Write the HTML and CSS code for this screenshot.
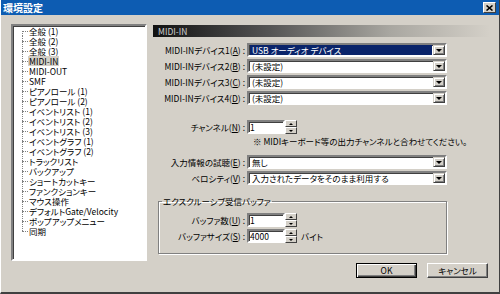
FILE: index.html
```html
<!DOCTYPE html>
<html lang="ja">
<head>
    <meta charset="UTF-8">
    <title>環境設定</title>
    <link rel="stylesheet" href="styles.css">
</head>
<body>
    <div class="window">
        <div class="titlebar">
            <span class="title">環境設定</span>
            <span class="close">
                <svg width="7" height="6" viewBox="0 0 7 6"><path d="M0.5 0.5 L6.5 5.5 M6.5 0.5 L0.5 5.5" stroke="#000" stroke-width="1.6"/></svg>
            </span>
        </div>

        <div class="main">
            <!-- left tree -->
            <div class="tree">
                <ul>
                    <li><span class="twig"></span><span class="node">全般 (1)</span></li>
                    <li><span class="twig"></span><span class="node">全般 (2)</span></li>
                    <li><span class="twig"></span><span class="node">全般 (3)</span></li>
                    <li><span class="twig"></span><span class="node sel">MIDI-IN</span></li>
                    <li><span class="twig"></span><span class="node">MIDI-OUT</span></li>
                    <li><span class="twig"></span><span class="node">SMF</span></li>
                    <li><span class="twig"></span><span class="node">ピアノロール (1)</span></li>
                    <li><span class="twig"></span><span class="node">ピアノロール (2)</span></li>
                    <li><span class="twig"></span><span class="node">イベントリスト (1)</span></li>
                    <li><span class="twig"></span><span class="node">イベントリスト (2)</span></li>
                    <li><span class="twig"></span><span class="node">イベントリスト (3)</span></li>
                    <li><span class="twig"></span><span class="node">イベントグラフ (1)</span></li>
                    <li><span class="twig"></span><span class="node">イベントグラフ (2)</span></li>
                    <li><span class="twig"></span><span class="node">トラックリスト</span></li>
                    <li><span class="twig"></span><span class="node">バックアップ</span></li>
                    <li><span class="twig"></span><span class="node">ショートカットキー</span></li>
                    <li><span class="twig"></span><span class="node">ファンクションキー</span></li>
                    <li><span class="twig"></span><span class="node">マウス操作</span></li>
                    <li><span class="twig"></span><span class="node">デフォルトGate/Velocity</span></li>
                    <li><span class="twig"></span><span class="node">ポップアップメニュー</span></li>
                    <li><span class="twig"></span><span class="node">同期</span></li>
                </ul>
            </div>

            <!-- settings panel -->
            <div class="panel">
                <div class="panel-head">MIDI-IN</div>

                <div class="devices">
                    <div class="field">
                        <label>MIDI-INデバイス1(<u>A</u>) :</label>
                        <div class="combo"><span class="value picked">USB オーディオ デバイス</span><span class="drop"><i></i></span></div>
                    </div>
                    <div class="field">
                        <label>MIDI-INデバイス2(<u>B</u>) :</label>
                        <div class="combo"><span class="value">(未設定)</span><span class="drop"><i></i></span></div>
                    </div>
                    <div class="field">
                        <label>MIDI-INデバイス3(<u>C</u>) :</label>
                        <div class="combo"><span class="value">(未設定)</span><span class="drop"><i></i></span></div>
                    </div>
                    <div class="field">
                        <label>MIDI-INデバイス4(<u>D</u>) :</label>
                        <div class="combo"><span class="value">(未設定)</span><span class="drop"><i></i></span></div>
                    </div>
                </div>

                <div class="channel">
                    <div class="field">
                        <label>チャンネル(<u>N</u>) :</label>
                        <div class="spin"><span class="input">1</span><span class="arrows"><b class="up"><i></i></b><b class="down"><i></i></b></span></div>
                    </div>
                    <div class="note">※ MIDIキーボード等の出力チャンネルと合わせてください。</div>
                </div>

                <div class="options">
                    <div class="field">
                        <label>入力情報の試聴(<u>E</u>) :</label>
                        <div class="combo"><span class="value">無し</span><span class="drop"><i></i></span></div>
                    </div>
                    <div class="field">
                        <label>ベロシティ(<u>V</u>) :</label>
                        <div class="combo"><span class="value">入力されたデータをそのまま利用する</span><span class="drop"><i></i></span></div>
                    </div>
                </div>

                <fieldset class="group">
                    <legend>エクスクルーシブ受信バッファ</legend>
                    <div class="field short">
                        <label>バッファ数(<u>U</u>) :</label>
                        <div class="spin"><span class="input">1</span><span class="arrows"><b class="up"><i></i></b><b class="down"><i></i></b></span></div>
                    </div>
                    <div class="field short">
                        <label>バッファサイズ(<u>S</u>) :</label>
                        <div class="spin"><span class="input">4000</span><span class="arrows"><b class="up"><i></i></b><b class="down"><i></i></b></span></div>
                        <span class="unit">バイト</span>
                    </div>
                </fieldset>

                <div class="buttons">
                    <button class="btn default">OK</button>
                    <button class="btn">キャンセル</button>
                </div>
            </div>
        </div>
    </div>
</body>
</html>
```

FILE: styles.css
```css
/* classic dialog look */
* {
    box-sizing: border-box;
}

body {
    margin: 0;
    width: 500px;
    height: 294px;
    overflow: hidden;
    background-color: #d4d0c8;
    font-family: "Noto Sans CJK JP", "DejaVu Sans", sans-serif;
    font-size: 8.5px;
    font-feature-settings: "palt";
    color: #000;
}

.window {
    height: 294px;
    border-left: 1px solid #fff;
    border-right: 1px solid #404040;
    border-bottom: 2px solid #404040;
}

/* title bar */
.titlebar {
    height: 15px;
    background-color: #0d5cb2;
    display: flex;
    align-items: center;
    justify-content: space-between;
    padding: 0 3px 0 2px;
    color: #fff;
    font-weight: bold;
    font-size: 10px;
}

.close {
    width: 13px;
    height: 11px;
    background-color: #d4d0c8;
    border: 1px solid;
    border-color: #fff #404040 #404040 #fff;
    display: flex;
    align-items: center;
    justify-content: center;
}

.main {
    display: flex;
    align-items: flex-start;
    padding: 9px 0 0 10px;
}

/* tree view */
.tree {
    width: 136px;
    height: 237px;
    background-color: #fff;
    border: 2px solid;
    border-color: #808080 #fff #fff #808080;
    box-shadow: inset 1px 1px #404040;
}

.tree ul {
    list-style: none;
    margin: 0;
    padding: 0 0 0 9px;
}

.tree li {
    height: 10px;
    line-height: 10px;
    display: flex;
    align-items: center;
    white-space: nowrap;
    background: repeating-linear-gradient(to bottom, #808080 0 1px, transparent 1px 2px) no-repeat 0 0 / 1px 100%;
}

.tree li:first-child {
    background-position: 0 5px;
    background-size: 1px 5px;
}

.tree li:last-child {
    background-size: 1px 5px;
}

.twig {
    width: 6px;
    border-top: 1px dotted #808080;
}

.node {
    padding: 0 1px;
}

.node.sel {
    background-color: #d4d0c8;
}

/* right side */
.panel {
    width: 337px;
    margin-left: 6px;
}

.panel-head {
    height: 12px;
    margin-top: 1px;
    line-height: 12px;
    padding-left: 5px;
    color: #d0d0d0;
    background: linear-gradient(to right, #111 0%, #555 35%, #a8a6a0 70%, #d4d0c8 100%);
}

.field {
    display: grid;
    grid-template-columns: 94px 200px;
    align-items: center;
    height: 14px;
    margin-top: 2px;
}

.field label {
    text-align: right;
    padding-right: 2px;
    white-space: nowrap;
}

.devices {
    margin-top: 6px;
}

.channel {
    margin-top: 15px;
}

.channel .field {
    grid-template-columns: 94px 50px;
}

.note {
    margin: 2px 0 0 100px;
    line-height: 10px;
    white-space: nowrap;
}

.options {
    margin-top: 9px;
}

/* combo box */
.combo {
    height: 14px;
    display: flex;
    background-color: #fff;
    border: 2px solid;
    border-color: #808080 #fff #fff #808080;
    box-shadow: inset 1px 1px #404040;
}

.combo .value {
    flex: 1;
    margin: 0 1px 0 1px;
    padding-left: 2px;
    line-height: 10px;
    white-space: nowrap;
}

.combo .value.picked {
    background-color: #0a246a;
    color: #fff;
}

.drop {
    width: 12px;
    height: 10px;
    display: flex;
    align-items: center;
    justify-content: center;
    background-color: #d4d0c8;
    border: 1px solid;
    border-color: #d4d0c8 #404040 #404040 #d4d0c8;
    box-shadow: inset 1px 1px #fff, inset -1px -1px #808080;
}

.drop i {
    border-left: 3px solid transparent;
    border-right: 3px solid transparent;
    border-top: 3px solid #000;
}

/* spin box */
.spin {
    width: 50px;
    height: 14px;
    display: flex;
}

.spin .input {
    flex: 1;
    line-height: 10px;
    padding-left: 1px;
    background-color: #fff;
    border: 2px solid;
    border-color: #808080 #fff #fff #808080;
    box-shadow: inset 1px 1px #404040;
}

.arrows {
    width: 12px;
    display: flex;
    flex-direction: column;
}

.arrows b {
    flex: 1;
    display: flex;
    align-items: center;
    justify-content: center;
    background-color: #d4d0c8;
    border: 1px solid;
    border-color: #fff #404040 #404040 #fff;
}

.arrows .up i {
    border-left: 2px solid transparent;
    border-right: 2px solid transparent;
    border-bottom: 2px solid #000;
}

.arrows .down i {
    border-left: 2px solid transparent;
    border-right: 2px solid transparent;
    border-top: 2px solid #000;
}

/* group box */
.group {
    width: 289px;
    margin: 11px 0 0 5px;
    padding: 5px 0 10px 0;
    border: 1px solid #808080;
    box-shadow: 1px 1px 0 #fff, inset 1px 1px 0 #fff;
}

.group legend {
    margin-left: 3px;
    padding: 0 1px;
    line-height: 10px;
}

.field.short {
    grid-template-columns: 88px 50px auto;
}

.unit {
    padding-left: 4px;
}

/* dialog buttons */
.buttons {
    display: flex;
    justify-content: flex-end;
    gap: 10px;
    margin-top: 9px;
    padding-right: 2px;
}

.btn {
    width: 61px;
    height: 15px;
    padding: 0;
    font: inherit;
    line-height: 11px;
    background-color: #d4d0c8;
    border: 1px solid;
    border-color: #fff #404040 #404040 #fff;
    box-shadow: inset -1px -1px #808080;
}

.btn.default {
    border-color: #000;
    box-shadow: inset 1px 1px #fff, inset -1px -1px #404040, inset -2px -2px #808080;
}
```
